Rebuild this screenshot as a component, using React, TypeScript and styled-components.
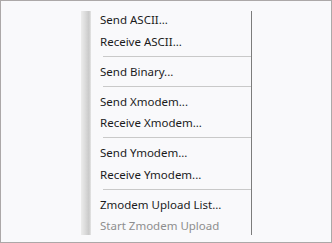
import React from "react";
import styled, { createGlobalStyle } from "styled-components";

const Global = createGlobalStyle`
  html, body { margin: 0; padding: 0; background: #f9f9fb; }
  * { box-sizing: border-box; }
`;

const Frame = styled.div`
  width: 332px;
  height: 243px;
  border: 1px solid #aca8a8;
  background: #f9f9fb;
  padding: 10px 0 0 80px;
  display: flex;
  align-items: flex-start;
`;

const Menu = styled.div`
  width: 171px;
  height: 224px;
  display: flex;
  border-right: 1px solid #7c7c7c;
`;

const Gutter = styled.div`
  width: 10px;
  flex: none;
  background: linear-gradient(to right, #ececec 0%, #dcdcdc 40%, #c9c9c9 80%, #e6e6e6 100%);
`;

const List = styled.div`
  flex: 1;
  display: flex;
  flex-direction: column;
  margin-top: -2px;
`;

const Item = styled.div<{ $disabled?: boolean }>`
  height: 21.5px;
  flex: none;
  display: flex;
  align-items: center;
  padding-left: 9px;
  font-family: "Noto Sans", "Open Sans", sans-serif;
  font-size: 11.5px;
  color: ${(p) => (p.$disabled ? "#8e8e8e" : "#1b1b1b")};
  white-space: nowrap;
`;

const Separator = styled.div`
  height: 8.5px;
  flex: none;
  display: flex;
  align-items: center;
  padding-left: 12px;
  &::after {
    content: "";
    flex: 1;
    height: 1px;
    background: #c9c9c9;
  }
`;

type Entry = { label?: string; disabled?: boolean; sep?: boolean };

const entries: Entry[] = [
  { label: "Send ASCII..." },
  { label: "Receive ASCII..." },
  { sep: true },
  { label: "Send Binary..." },
  { sep: true },
  { label: "Send Xmodem..." },
  { label: "Receive Xmodem..." },
  { sep: true },
  { label: "Send Ymodem..." },
  { label: "Receive Ymodem..." },
  { sep: true },
  { label: "Zmodem Upload List..." },
  { label: "Start Zmodem Upload", disabled: true },
];

export default function App() {
  return (
    <>
      <Global />
      <Frame>
        <Menu>
          <Gutter />
          <List>
            {entries.map((e, i) =>
              e.sep ? (
                <Separator key={i} />
              ) : (
                <Item key={i} $disabled={e.disabled}>
                  {e.label}
                </Item>
              )
            )}
          </List>
        </Menu>
      </Frame>
    </>
  );
}
